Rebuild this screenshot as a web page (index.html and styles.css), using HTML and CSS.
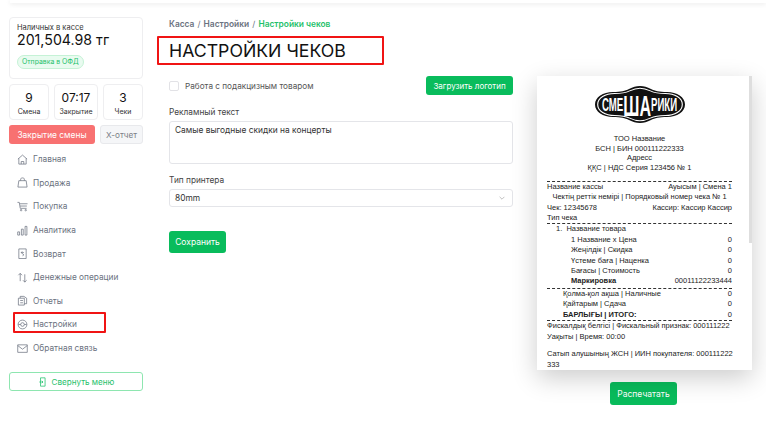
FILE: index.html
```html
<!DOCTYPE html>
<html lang="en">
<head>
  <meta charset="UTF-8">
  <meta name="viewport" content="width=device-width, initial-scale=1.0">
  <title>Настройки чеков</title>
  <link rel="stylesheet" href="styles.css">
</head>
<body>
  <div class="topbar"></div>
  <div class="page">
    <aside class="sidebar">
      <div class="card cash">
        <div class="cash-label">Наличных в кассе</div>
        <div class="cash-value">201,504.98 тг</div>
        <span class="ofd">Отправка в ОФД</span>
      </div>
      <div class="stats">
        <div class="card stat stat-a"><b>9</b><span>Смена</span></div>
        <div class="card stat stat-b"><b>07:17</b><span>Закрытие</span></div>
        <div class="card stat stat-a"><b>3</b><span>Чеки</span></div>
      </div>
      <div class="shift-btns">
        <button class="btn-close">Закрытие смены</button>
        <button class="btn-x">Х-отчет</button>
      </div>
      <nav class="menu">
        <a class="menu-item"><svg viewBox="0 0 12 12"><path d="M1 5.600 6 1.200l5 4.400M2 4.800V11h8V4.800M4.600 11V8.200h2.800V11"/></svg>Главная</a>
        <a class="menu-item"><svg viewBox="0 0 12 12"><path d="M1 11 2 4h8l1 7zM4 4V2.400C4 1.500 4.800 1 6 1s2 .5 2 1.400V4"/></svg>Продажа</a>
        <a class="menu-item"><svg viewBox="0 0 12 12"><path d="M.5 1.500h2l1 6.500h7M3 3h8.500M3.300 5.500h7.500"/><circle cx="4.500" cy="10" r=".8"/><circle cx="9.500" cy="10" r=".8"/></svg>Покупка</a>
        <a class="menu-item"><svg viewBox="0 0 12 12"><path d="M.8 7.500h2v3.500h-2zM4.800 4.500h2V11h-2zM8.800 1.500h2V11h-2z"/></svg>Аналитика</a>
        <a class="menu-item"><svg viewBox="0 0 12 12"><path d="M2 1h8v10.500H2zM7.500 5H4.500l1.200-1.300M4.500 5l3 2.500-1.500 1"/></svg>Возврат</a>
        <a class="menu-item"><svg viewBox="0 0 12 12"><path d="M3.500 10V1.500M1.500 3.500l2-2 2 2M8.500 2.500V11M6.500 9l2 2 2-2"/></svg>Денежные операции</a>
        <a class="menu-item"><svg viewBox="0 0 12 12"><path d="M1.500 3.500h6.500V11H1.500zM3.500 3.500V1.500h4l3 2v6H8M3.500 6h3M3.500 8.500h3"/></svg>Отчеты</a>
        <a class="menu-item"><svg viewBox="0 0 12 12"><circle cx="6" cy="6" r="4.800"/><circle cx="6" cy="6" r="2"/><path d="M1.500 6h2.500M8 6h2.500"/></svg>Настройки</a>
        <a class="menu-item"><svg viewBox="0 0 12 12"><path d="M.8 2h10.400v8.200H.8zM.8 2.800 6 6.800l5.200-4"/></svg>Обратная связь</a>
      </nav>
      <button class="btn-collapse"><svg viewBox="0 0 12 12"><path d="M3 1h5.500v10H3zM1.500 6h4.500M4.500 4.500 6 6 4.500 7.500"/></svg>Свернуть меню</button>
    </aside>

    <main class="content">
      <div class="crumbs">Касса <i>/</i> Настройки <i>/</i> <em>Настройки чеков</em></div>
      <h1>НАСТРОЙКИ ЧЕКОВ</h1>
      <div class="form-top">
        <label class="check"><span class="box"></span>Работа с подакцизным товаром</label>
        <button class="btn-green btn-logo">Загрузить логотип</button>
      </div>
      <div class="field-label ad-label">Рекламный текст</div>
      <div class="textarea">Самые выгодные скидки на концерты</div>
      <div class="field-label printer-label">Тип принтера</div>
      <div class="select">80mm<svg viewBox="0 0 10 6"><path d="M1 1l4 4 4-4"/></svg></div>
      <button class="btn-green btn-save">Сохранить</button>
    </main>

    <section class="preview">
      <div class="receipt">
        <div class="scroll-thumb"></div>
        <div class="receipt-inner">
          <svg class="logo" viewBox="0 0 90 37">
            <path class="logo-bg" d="M18 6C26 6 30 5 34 3 38 1 41 0 45 0 49 0 52 1 56 3 60 5 64 6 72 6 82 6 90 11 90 18.500 90 26 82 31 72 31 64 31 60 32 56 34 52 36 49 37 45 37 41 37 38 36 34 34 30 32 26 31 18 31 8 31 0 26 0 18.500 0 11 8 6 18 6Z"/>
            <path class="logo-ring" transform="translate(45 18.500) scale(.94 .88) translate(-45 -18.500)" d="M18 6C26 6 30 5 34 3 38 1 41 0 45 0 49 0 52 1 56 3 60 5 64 6 72 6 82 6 90 11 90 18.500 90 26 82 31 72 31 64 31 60 32 56 34 52 36 49 37 45 37 41 37 38 36 34 34 30 32 26 31 18 31 8 31 0 26 0 18.500 0 11 8 6 18 6Z"/>
            <text class="logo-text" transform="translate(7 25) scale(.535 1)"><tspan font-size="18">СМЕ</tspan><tspan font-size="30" dy="5">ША</tspan><tspan font-size="18" dy="-5">РИКИ</tspan></text>
          </svg>
          <div class="center company">
            <div>ТОО Название</div>
            <div>БСН | БИН 000111222333</div>
            <div>Адресс</div>
            <div>ҚҚС | НДС Серия 123456 № 1</div>
          </div>
          <div class="dash-top">
            <div class="row"><span>Название кассы</span><span>Ауысым | Смена 1</span></div>
            <div class="center">Чектің реттік немірі | Порядковый номер чека № 1</div>
            <div class="row"><span>Чек: 12345678</span><span>Кассир: Кассир Кассир</span></div>
            <div>Тип чека</div>
          </div>
          <div class="dash-top goods">
            <div class="goods-name">1.&nbsp;&nbsp;Название товара</div>
            <div class="row sub"><span>1 Название х Цена</span><span>0</span></div>
            <div class="row sub"><span>Жеңілдік | Скидка</span><span>0</span></div>
            <div class="row sub"><span>Үстеме баға | Наценка</span><span>0</span></div>
            <div class="row sub"><span>Бағасы | Стоимость</span><span>0</span></div>
            <div class="row sub"><b>Маркировка</b><span>00011122233444</span></div>
          </div>
          <div class="dash-top totals">
            <div class="row"><span>Қолма-қол ақша | Наличные</span><span>0</span></div>
            <div class="row"><span>Қайтарым | Сдача</span><span>0</span></div>
            <div class="row"><b>БАРЛЫҒЫ | ИТОГО:</b><span>0</span></div>
          </div>
          <div class="dash-top fiscal">
            <div>Фискалдық белгісі | Фискальный признак: 000111222</div>
            <div>Уақыты | Время: 00:00</div>
            <div class="buyer">Сатып алушының ЖСН | ИИН покупателя: 000111222<br>333</div>
          </div>
        </div>
      </div>
      <button class="btn-green btn-print">Распечатать</button>
    </section>
  </div>

  <div class="mark mark-title"></div>
  <div class="mark mark-menu"></div>
</body>
</html>
```

FILE: styles.css
```css
* { box-sizing: border-box; }
html, body { margin: 0; height: 100%; }
body { font-family: Inter, "Noto Sans", sans-serif; background: #fff; color: #1c1c1e; overflow: hidden; position: relative; }
button { font-family: inherit; border: none; cursor: pointer; padding: 0; }

.topbar { height: 3px; margin-left: 10px; background: #fff; box-shadow: 0 1px 5px rgba(0,0,0,0.1); }
.page { display: flex; padding: 14px 0 0 9px; }

.sidebar { width: 134px; flex: none; }
.card { background: #fff; border: 1px solid #eeeef0; border-radius: 4px; }
.cash { height: 62px; padding: 5px 7px; }
.cash-label { font-size: 7.500px; line-height: 9px; color: #333; }
.cash-value { font-size: 14.200px; line-height: 17px; color: #111; margin-top: -1px; }
.ofd { display: inline-block; margin-top: 4px; height: 14px; padding: 0 4px; line-height: 12px; font-size: 6.900px; color: #1fc16b; background: #e9fbf0; border: 1px solid #c5f2d6; border-radius: 7px; }

.stats { display: flex; gap: 5px; margin-top: 5px; }
.stat { height: 36px; display: flex; flex-direction: column; align-items: center; padding-top: 6px; }
.stat-a { width: 40px; }
.stat-b { width: 44px; }
.stat b { font-size: 12px; line-height: 14px; font-weight: 400; color: #111; }
.stat span { font-size: 7px; line-height: 9px; margin-top: 2px; color: #333; }

.shift-btns { display: flex; gap: 5px; margin-top: 5px; }
.btn-close { width: 86px; height: 19px; background: #f87171; color: #fff; font-size: 8.400px; border-radius: 3px; }
.btn-x { width: 43px; height: 19px; background: #f5f6f8; border: 1px solid #e8e9ec; color: #7b7f87; font-size: 8.200px; border-radius: 3px; }

.menu { margin-top: 3.500px; padding-left: 8px; }
.menu-item { display: flex; align-items: center; gap: 5px; height: 23.600px; font-size: 8.300px; color: #6b7280; white-space: nowrap; }
.menu-item svg { width: 11px; height: 11px; flex: none; fill: none; stroke: #6b7280; stroke-width: .8; }

.btn-collapse { display: flex; align-items: center; justify-content: center; gap: 4px; width: 134px; height: 19px; margin-top: 12.500px; background: #fff; border: 1px solid #8ee6b0; border-radius: 3px; color: #1fc16b; font-size: 8.100px; }
.btn-collapse svg { width: 10px; height: 10px; fill: none; stroke: #1fc16b; stroke-width: .9; }

.content { width: 344px; margin-left: 26px; flex: none; }
.crumbs { font-size: 8.400px; line-height: 10px; font-weight: 600; color: #6b7280; margin-top: 2px; }
.crumbs i { font-style: normal; font-weight: 400; margin: 0 1px; }
.crumbs em { font-style: normal; color: #1fc16b; }
h1 { margin: 10px 0 0; font-size: 17.700px; line-height: 24px; font-weight: 400; color: #111; }

.form-top { display: flex; align-items: center; justify-content: space-between; margin-top: 13px; }
.check { display: flex; align-items: center; gap: 6px; font-size: 8.200px; color: #555; }
.box { width: 10px; height: 10px; border: 1px solid #e2e2e6; border-radius: 2px; }
.btn-green { background: #09bc5c; color: #fff; border-radius: 3px; }
.btn-logo { width: 87px; height: 19px; font-size: 8px; }

.field-label { font-size: 8.300px; line-height: 10px; color: #444; }
.ad-label { margin-top: 12px; }
.textarea { height: 43px; margin-top: 4px; padding: 3px 5px; font-size: 8.400px; line-height: 11px; color: #333; border: 1px solid #e4e5e9; border-radius: 3px; }
.printer-label { margin-top: 11px; }
.select { display: flex; align-items: center; justify-content: space-between; height: 18px; margin-top: 4px; padding: 0 5px; font-size: 8.400px; color: #333; border: 1px solid #e4e5e9; border-radius: 3px; }
.select svg { width: 6px; height: 4px; margin-right: 2px; fill: none; stroke: #999; stroke-width: 1; }
.btn-save { display: block; width: 57px; height: 22px; margin-top: 24px; font-size: 8.500px; }

.preview { width: 215px; margin-left: 24px; margin-top: 59px; flex: none; display: flex; flex-direction: column; align-items: center; }
.receipt { position: relative; width: 215px; height: 294px; overflow: hidden; background: #fff; box-shadow: 0 8px 24px rgba(0,0,0,0.2); }
.scroll-thumb { position: absolute; top: 0; right: 0; width: 3px; height: 167px; background: #dedede; }
.receipt-inner { padding: 10px 20px 0 10px; font-family: "Liberation Sans", sans-serif; font-size: 7.500px; line-height: 10.400px; color: #222; white-space: nowrap; }
.logo { display: block; width: 90px; height: 37px; margin: 0 auto; }
.logo-bg { fill: #111; }
.logo-ring { fill: none; stroke: #fff; stroke-width: 1.200; }
.logo-text { font-family: "Liberation Sans", sans-serif; font-weight: 700; fill: #fff; }
.center { text-align: center; }
.company { margin-top: 11px; line-height: 9.700px; }
.row { display: flex; justify-content: space-between; }
.dash-top { border-top: 1px dashed #333; }
.company + .dash-top { margin-top: 8px; }
.goods-name { padding-left: 9px; }
.sub { margin-left: 24px; }
.totals { padding-left: 16px; margin-top: 1px; }
.buyer { margin-top: 7.500px; }

.btn-print { width: 67px; height: 23px; margin-top: 12px; margin-right: 2px; font-size: 8.500px; }

.mark { position: absolute; border: 2px solid #f01414; border-radius: 1px; }
.mark-title { left: 157px; top: 36px; width: 227px; height: 29px; }
.mark-menu { left: 13px; top: 312px; width: 93px; height: 21px; }
```
